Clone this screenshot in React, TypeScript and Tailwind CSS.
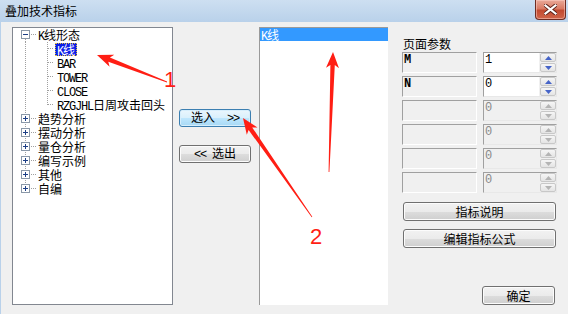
import React from "react";

const MONO = "font-['Liberation_Mono',monospace]";

function T({ s, latin = "text-[12px] tracking-[-1.2px]" }: { s: string; latin?: string }) {
  const parts = s.match(/[\x00-\x7f]+|[^\x00-\x7f]+/g) || [];
  return (
    <span>
      {parts.map((p, i) =>
        /^[\x00-\x7f]+$/.test(p) ? (
          <span key={i} className={`${MONO} ${latin} whitespace-pre`}>
            {p}
          </span>
        ) : (
          <span key={i}>{p}</span>
        )
      )}
    </span>
  );
}

const DOT = { stroke: "#a0a0a0", strokeDasharray: "1 1", shapeRendering: "crispEdges" as const };

function ExpBox({ open }: { open: boolean }) {
  return (
    <g shapeRendering="crispEdges">
      <rect x={8.5} y={2.5} width={8} height={8} fill="#ffffff" stroke="#8a98a8" />
      <line x1={10} y1={6.5} x2={15} y2={6.5} stroke="#1d3f86" />
      {!open && <line x1={12.5} y1={4} x2={12.5} y2={9} stroke="#1d3f86" />}
    </g>
  );
}

type Root = { label: string; open?: boolean; children?: string[] };
const roots: Root[] = [
  { label: "K线形态", open: true, children: ["K线", "BAR", "TOWER", "CLOSE", "RZGJHL日周攻击回头"] },
  { label: "趋势分析" },
  { label: "摆动分析" },
  { label: "量仓分析" },
  { label: "编写示例" },
  { label: "其他" },
  { label: "自编" },
];

function Tree() {
  const rows: React.ReactNode[] = [];
  roots.forEach((r, ri) => {
    const first = ri === 0;
    const last = ri === roots.length - 1;
    rows.push(
      <div key={`r${ri}`} className="flex h-[14px] items-center">
        <svg width={25} height={14} className="shrink-0">
          <line x1={12.5} y1={first ? 7 : 0} x2={12.5} y2={last ? 7 : 14} {...DOT} />
          <line x1={18} y1={6.5} x2={24} y2={6.5} {...DOT} />
          <ExpBox open={!!r.open} />
        </svg>
        <span className="h-[14px] leading-[14px] whitespace-nowrap">
          <T s={r.label} />
        </span>
      </div>
    );
    if (r.open && r.children) {
      r.children.forEach((c, ci) => {
        const lastC = ci === r.children!.length - 1;
        const sel = ci === 0;
        rows.push(
          <div key={`c${ri}-${ci}`} className="flex h-[14px] items-center">
            <svg width={42} height={14} className="shrink-0">
              <line x1={12.5} y1={0} x2={12.5} y2={14} {...DOT} />
              <line x1={34.5} y1={0} x2={34.5} y2={lastC ? 7 : 14} {...DOT} />
              <line x1={35} y1={6.5} x2={41} y2={6.5} {...DOT} />
            </svg>
            <span
              className={
                sel
                  ? "h-[13px] px-[2px] leading-[13px] bg-[#0b1ee8] text-white outline-1 outline-dotted outline-[#e0c040] -outline-offset-1"
                  : "h-[14px] px-[2px] leading-[14px] whitespace-nowrap"
              }
            >
              <T s={c} />
            </span>
          </div>
        );
      });
    }
  });
  return (
    <div className="w-[161px] h-[278px] shrink-0 border border-[#828790] bg-white text-[12px] leading-[14px] text-black overflow-hidden">
      {rows}
    </div>
  );
}

function Btn({ children, cls = "", focus = false }: { children: React.ReactNode; cls?: string; focus?: boolean }) {
  return (
    <div
      className={`flex items-center justify-center rounded-[3px] border text-[12px] text-black leading-[14px] ${
        focus
          ? "border-[#3c7fb1] bg-[linear-gradient(#eaf6fd_0%,#d9f0fc_50%,#bee6fd_51%,#a7d9f5_100%)] shadow-[inset_0_0_0_1px_#d6eefc]"
          : "border-[#707070] bg-[linear-gradient(#f2f2f2_0%,#ebebeb_50%,#dddddd_51%,#cfcfcf_100%)] shadow-[inset_0_0_0_1px_#fcfcfc]"
      } ${cls}`}
    >
      {children}
    </div>
  );
}

function Spin({ enabled }: { enabled: boolean }) {
  const c = enabled ? "#4664c8" : "#b4b4b4";
  const part = (up: boolean) => (
    <div className="flex h-[10px] w-[16px] items-center justify-center rounded-[2px] border border-[#c8c8c8] bg-[linear-gradient(#f6f6f6,#e4e4e4)]">
      <svg width={7} height={4}>
        <polygon points={up ? "3.5,0 7,4 0,4" : "0,0 7,0 3.5,4"} fill={c} />
      </svg>
    </div>
  );
  return (
    <div className="flex flex-col gap-px pl-px">
      {part(true)}
      {part(false)}
    </div>
  );
}

function ParamRow({ name, val, enabled }: { name: string; val: string; enabled: boolean }) {
  return (
    <div className="flex h-[21px] items-stretch">
      <div className={`${MONO} w-[75px] border-t border-l border-[#a0a0a0] border-r-white border-b-white border-r border-b bg-[#f0f0f0] pl-[1px] pt-[1px] text-[12px] font-bold leading-[12px] text-black`}>
        {name}
      </div>
      <div className="ml-[6px] flex w-[74px] items-stretch border-t border-l border-[#a0a0a0] border-r border-b border-r-[#e8e8e8] border-b-[#e8e8e8]">
        <div className={`${MONO} flex-1 pl-[1px] pt-[1px] text-[12px] leading-[13px] ${enabled ? "bg-white text-black" : "bg-[#f0f0f0] text-[#8a8a8a]"}`}>
          {val}
        </div>
        <Spin enabled={enabled} />
      </div>
    </div>
  );
}

function arrowPts(x1: number, y1: number, x2: number, y2: number, head = 16, hw = 6.5, w0 = 0.4, w1 = 2.2) {
  const dx = x2 - x1, dy = y2 - y1;
  const L = Math.hypot(dx, dy);
  const ux = dx / L, uy = dy / L;
  const nx = -uy, ny = ux;
  const bx = x2 - ux * head, by = y2 - uy * head;
  const cx = x2 - ux * (head - 3), cy = y2 - uy * (head - 3);
  const p = [
    [x1 + nx * w0, y1 + ny * w0],
    [cx + nx * w1, cy + ny * w1],
    [bx + nx * hw, by + ny * hw],
    [x2, y2],
    [bx - nx * hw, by - ny * hw],
    [cx - nx * w1, cy - ny * w1],
    [x1 - nx * w0, y1 - ny * w0],
  ];
  return p.map((q) => q.map((v) => v.toFixed(1)).join(",")).join(" ");
}

export default function App() {
  return (
    <div className="relative h-[314px] w-[568px] overflow-hidden bg-[#f0f0f0] font-['Noto_Sans_CJK_SC',sans-serif] select-none">
      {/* title bar */}
      <div className="flex h-[22px] items-start justify-between bg-[linear-gradient(#cddff1,#b9d1ea)]">
        <div className="pl-[5px] pt-[4px] text-[12px] leading-[14px] text-black">叠加技术指标</div>
        <div className="mr-[2px] flex h-[20px] w-[31px] items-center justify-center rounded-b-[4px] border border-t-0 border-[#6e2c22] bg-[linear-gradient(#e9a999_0%,#d97a64_45%,#c24a30_55%,#d0654a_100%)] shadow-[inset_0_0_0_1px_rgba(255,210,200,0.5)]">
          <svg width={13} height={11} viewBox="0 0 13 11">
            <path d="M1.5 1.5 L11.5 9.5 M11.5 1.5 L1.5 9.5" stroke="#5a2018" strokeWidth={4} strokeLinecap="square" />
            <path d="M1.5 1.5 L11.5 9.5 M11.5 1.5 L1.5 9.5" stroke="#ffffff" strokeWidth={2.2} strokeLinecap="square" />
          </svg>
        </div>
      </div>

      {/* body */}
      <div className="flex h-[292px] border-l border-[#b9d1ea] pl-[11px] pt-[5px]">
        <Tree />

        <div className="ml-[6px] flex w-[72px] shrink-0 flex-col pt-[82px]">
          <Btn focus cls="h-[18px]">
            <T s="选入  >>" />
          </Btn>
          <Btn cls="mt-[18px] h-[18px]">
            <T s="<< 选出" />
          </Btn>
        </div>

        <div className="ml-[8px] h-[278px] w-[129px] shrink-0 border-t border-l border-[#9a9a9a] bg-white text-[12px]">
          <div className="h-[13px] bg-[#3399ff] pl-[1px] leading-[13px] text-white">
            <T s="K线" />
          </div>
        </div>

        <div className="ml-[14px] flex w-[156px] shrink-0 flex-col pt-[8px]">
          <div className="h-[17px] pl-[1px] text-[12px] leading-[17px] text-black">页面参数</div>
          <div className="flex flex-col gap-[3px]">
            <ParamRow name="M" val="1" enabled />
            <ParamRow name="N" val="0" enabled />
            <ParamRow name="" val="0" enabled={false} />
            <ParamRow name="" val="0" enabled={false} />
            <ParamRow name="" val="0" enabled={false} />
            <ParamRow name="" val="0" enabled={false} />
          </div>
          <Btn cls="ml-[1px] mt-[9px] h-[19px] w-[153px]">指标说明</Btn>
          <Btn cls="ml-[1px] mt-[8px] h-[19px] w-[153px]">编辑指标公式</Btn>
          <Btn cls="ml-[80px] mt-[38px] h-[19px] w-[73px]">确定</Btn>
        </div>
      </div>

      {/* annotations */}
      <svg className="pointer-events-none absolute left-0 top-0" width={568} height={314}>
        <polygon points={arrowPts(167, 82, 97, 55)} fill="#ff1e14" />
        <polygon points={arrowPts(312, 217, 243, 118)} fill="#ff1e14" />
        <polygon points={arrowPts(329, 172, 333, 52)} fill="#ff1e14" />
      </svg>
      <div className="pointer-events-none absolute left-[164px] top-[69px] font-['Liberation_Sans',sans-serif] text-[22px] leading-none text-[#ff1e14]">
        1
      </div>
      <div className="pointer-events-none absolute left-[310px] top-[226px] font-['Liberation_Sans',sans-serif] text-[22px] leading-none text-[#ff1e14]">
        2
      </div>
    </div>
  );
}
